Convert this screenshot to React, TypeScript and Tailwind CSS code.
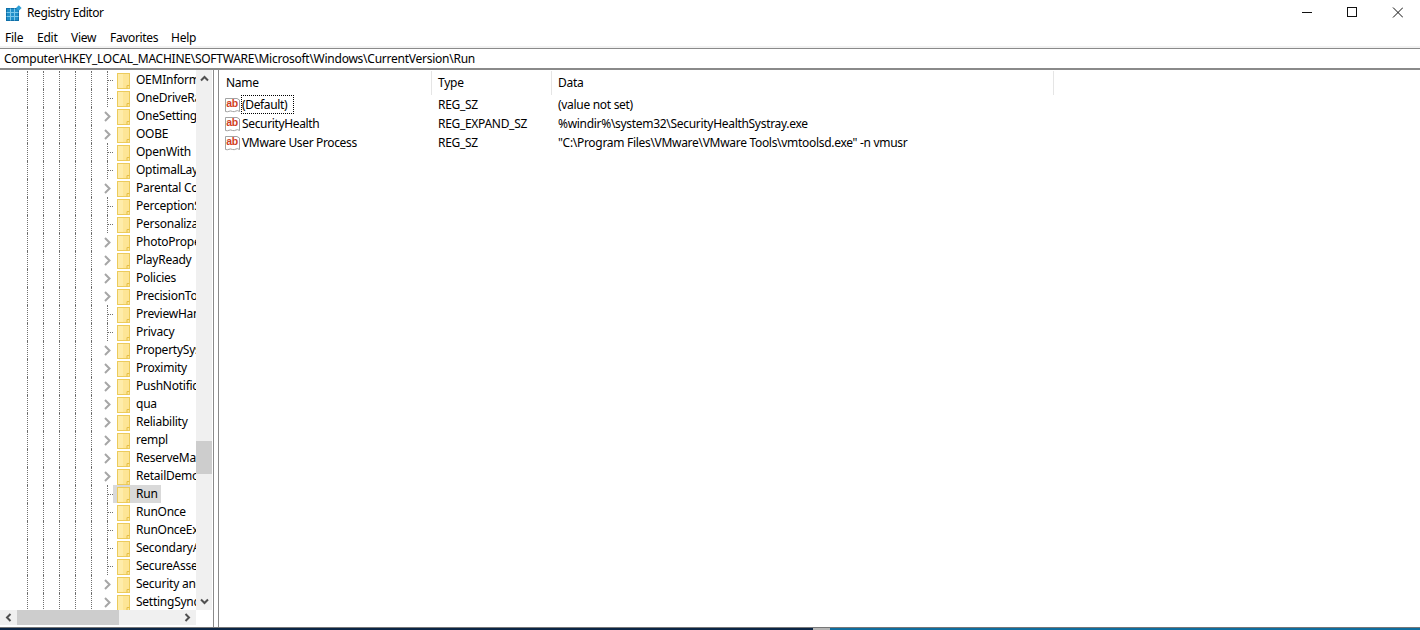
import React from 'react';

const treeRows: { name: string; kids: boolean; selected?: boolean }[] = [
    { name: 'OEMInformation', kids: false },
    { name: 'OneDriveRamps', kids: false },
    { name: 'OneSettings', kids: true },
    { name: 'OOBE', kids: true },
    { name: 'OpenWith', kids: false },
    { name: 'OptimalLayout', kids: false },
    { name: 'Parental Controls', kids: true },
    { name: 'PerceptionSimulation', kids: false },
    { name: 'Personalization', kids: false },
    { name: 'PhotoPropertyHandler', kids: true },
    { name: 'PlayReady', kids: true },
    { name: 'Policies', kids: true },
    { name: 'PrecisionTouchPad', kids: true },
    { name: 'PreviewHandlers', kids: false },
    { name: 'Privacy', kids: false },
    { name: 'PropertySystem', kids: true },
    { name: 'Proximity', kids: true },
    { name: 'PushNotifications', kids: true },
    { name: 'qua', kids: true },
    { name: 'Reliability', kids: true },
    { name: 'rempl', kids: true },
    { name: 'ReserveManager', kids: true },
    { name: 'RetailDemo', kids: true },
    { name: 'Run', kids: false, selected: true },
    { name: 'RunOnce', kids: false },
    { name: 'RunOnceEx', kids: false },
    { name: 'SecondaryAuth', kids: false },
    { name: 'SecureAssessment', kids: false },
    { name: 'Security and Maintenance', kids: true },
    { name: 'SettingSync', kids: true },
];

const values = [
    { name: '(Default)', type: 'REG_SZ', data: '(value not set)', focus: true },
    { name: 'SecurityHealth', type: 'REG_EXPAND_SZ', data: '%windir%\\system32\\SecurityHealthSystray.exe' },
    { name: 'VMware User Process', type: 'REG_SZ', data: '"C:\\Program Files\\VMware\\VMware Tools\\vmtoolsd.exe" -n vmusr' },
];

const AppIcon = () => (
    <svg width="16" height="16" viewBox="0 0 16 16" className="shrink-0">
        <rect x="0.5" y="3.5" width="12" height="12" fill="#1f8fc9" stroke="#0f6fa8" />
        <path d="M4.5 3.5v12M8.5 3.5v12M0.5 7.5h12M0.5 11.5h12" stroke="#7cc8ea" strokeWidth="1" />
        <path d="M12.8 0.2l2.8 2.8-2.8 2.8-2.8-2.8z" fill="#2f9fd6" />
    </svg>
);

const FolderIcon = () => (
    <svg width="13" height="16" viewBox="0 0 13 16" className="mt-px shrink-0">
        <rect x="0.5" y="0.5" width="12" height="15" fill="#fde596" stroke="#eccb5c" />
        <rect x="1" y="1" width="5" height="14" fill="#fff0b8" opacity="0.6" />
        <path d="M10 15.5v-3h2.5" fill="none" stroke="#e6bf45" />
    </svg>
);

const ChevronGlyph = () => (
    <svg width="7" height="11" viewBox="0 0 7 11" className="-ml-[3px] shrink-0">
        <path d="M1 1l4.5 4.5L1 10" fill="none" stroke="#a6a6a6" strokeWidth="2" />
    </svg>
);

const StringIcon = () => (
    <svg width="16" height="16" viewBox="0 0 16 16" className="shrink-0">
        <path d="M0.5 1.5h11.5l2.5 1.5v11.5q-2-1.5-3.5-0.5t-3.5 0.5q-2-1-3.5-0.2t-3.5 0.2z" fill="#ffffff" stroke="#a3a3a3" />
        <text x="1.2" y="10" fontSize="10.5" fontWeight="700" fill="#d1401f" fontFamily="'Liberation Sans', sans-serif">ab</text>
    </svg>
);

const Arrow = ({ d }: { d: string }) => (
    <svg width="9" height="9" viewBox="0 0 9 9">
        <path d={d} fill="none" stroke="#505050" strokeWidth="2" />
    </svg>
);

const TreeRow = ({ name, kids, selected }: { name: string; kids: boolean; selected?: boolean }) => (
    <div className="flex h-[18px] items-center whitespace-nowrap pl-[27px]">
        <div className="h-full w-4 shrink-0 border-l border-dotted border-[#707070]" />
        <div className="h-full w-4 shrink-0 border-l border-dotted border-[#707070]" />
        <div className="h-full w-4 shrink-0 border-l border-dotted border-[#707070]" />
        <div className="h-full w-4 shrink-0 border-l border-dotted border-[#707070]" />
        <div className="h-full w-4 shrink-0 border-l border-dotted border-[#707070]" />
        {kids ? (
            <div className="flex h-full w-[6px] shrink-0 items-center">
                <ChevronGlyph />
            </div>
        ) : (
            <div className="flex h-full w-[6px] shrink-0 items-center border-l border-dotted border-[#707070]">
                <div className="w-[5px] border-t border-dotted border-[#707070]" />
            </div>
        )}
        <div className={`flex h-full shrink-0 items-center pl-1 pr-[3px] ${selected ? 'bg-[#d9d9d9]' : ''}`}>
            <FolderIcon />
            <span className="ml-[6px]">{name}</span>
        </div>
    </div>
);

export default function App() {
    return (
        <div className="flex h-[630px] w-[1420px] flex-col overflow-hidden bg-white font-['Noto_Sans',sans-serif] text-[12px] leading-none tracking-[-0.25px] text-black">
            {/* title bar */}
            <div className="flex h-[30px] shrink-0 items-center justify-between">
                <div className="flex items-center gap-[5px] pb-[4px] pl-[6px]">
                    <AppIcon />
                    <span className="tracking-[-0.4px]">Registry Editor</span>
                </div>
                <div className="flex items-center pb-[6px] pr-[17px]">
                    <svg width="118" height="12" viewBox="0 0 118 12">
                        <path d="M17 6.5h10" stroke="#111" fill="none" />
                        <rect x="62.5" y="1.5" width="9" height="9" stroke="#111" fill="none" />
                        <path d="M108 1.5l10 10M118 1.5l-10 10" stroke="#111" fill="none" />
                    </svg>
                </div>
            </div>

            {/* menu */}
            <div className="flex h-[16px] shrink-0 items-center pl-[5px]">
                <span className="w-[32px]">File</span>
                <span className="w-[34px]">Edit</span>
                <span className="w-[39px]">View</span>
                <span className="w-[61px] tracking-[-0.35px]">Favorites</span>
                <span>Help</span>
            </div>
            <div className="h-[2px] shrink-0 bg-[#f2f2f2]" />

            {/* address */}
            <div className="flex h-[22px] shrink-0 items-center border-y border-y-[#8a8a8a] border-b-2 pl-1 pt-px">
                Computer\HKEY_LOCAL_MACHINE\SOFTWARE\Microsoft\Windows\CurrentVersion\Run
            </div>

            <div className="flex min-h-0 flex-1">
                {/* tree pane */}
                <div className="flex w-[213px] shrink-0 flex-col">
                    <div className="flex min-h-0 flex-1">
                        <div className="w-[196px] shrink-0 overflow-hidden pt-px">
                            {treeRows.map((row) => (
                                <TreeRow key={row.name} {...row} />
                            ))}
                        </div>
                        <div className="flex w-4 flex-col bg-[#f0f0f0]">
                            <div className="flex h-[17px] items-center justify-center">
                                <Arrow d="M1 6.5l3.5-3.5 3.5 3.5" />
                            </div>
                            <div className="flex-1 pt-[354px]">
                                <div className="h-[33px] bg-[#cdcdcd]" />
                            </div>
                            <div className="flex h-[17px] items-center justify-center">
                                <Arrow d="M1 2.5l3.5 3.5 3.5-3.5" />
                            </div>
                        </div>
                    </div>
                    <div className="flex h-[15px] shrink-0">
                        <div className="flex w-[196px] items-center bg-[#f0f0f0]">
                            <div className="flex w-[17px] justify-center">
                                <Arrow d="M6.5 1L3 4.5 6.5 8" />
                            </div>
                            <div className="h-full w-[102px] bg-[#cdcdcd]" />
                            <div className="flex flex-1 justify-end pr-1">
                                <Arrow d="M2.5 1L6 4.5 2.5 8" />
                            </div>
                        </div>
                    </div>
                    <div className="h-[2px] shrink-0" />
                </div>

                {/* splitter */}
                <div className="w-[6px] shrink-0 border-x border-x-[#8a8a8a]" />

                {/* value list */}
                <div className="min-w-0 flex-1">
                    <div className="flex h-[25px] items-center">
                        <div className="w-[212px] pl-[7px] pt-px">Name</div>
                        <div className="h-[24px] w-px bg-[#e5e5e5]" />
                        <div className="w-[119px] pl-[6px] pt-px">Type</div>
                        <div className="h-[24px] w-px bg-[#e5e5e5]" />
                        <div className="w-[501px] pl-[6px] pt-px">Data</div>
                        <div className="h-[24px] w-px bg-[#e5e5e5]" />
                    </div>
                    {values.map((v) => (
                        <div key={v.name} className="flex h-[19px] items-center whitespace-nowrap tracking-[-0.3px]">
                            <div className="flex h-full w-[214px] items-center pl-[6px]">
                                <StringIcon />
                                <span className={`flex h-full items-center border border-dotted pr-[6px] tracking-[-0.35px] ${v.focus ? 'border-black' : 'border-transparent'}`}>{v.name}</span>
                            </div>
                            <div className="w-[120px] pl-[5px]">{v.type}</div>
                            <div className="pl-[5px]">{v.data}</div>
                        </div>
                    ))}
                </div>
            </div>

            {/* taskbar edge */}
            <div className="h-px shrink-0 bg-[#777]" />
            <div className="flex h-[2px] shrink-0">
                <div className="w-[813px] bg-[#0b2545]" />
                <div className="w-[17px] bg-[#b5b5b5]" />
                <div className="flex-1 bg-[#0f6d9e]" />
            </div>
        </div>
    );
}
